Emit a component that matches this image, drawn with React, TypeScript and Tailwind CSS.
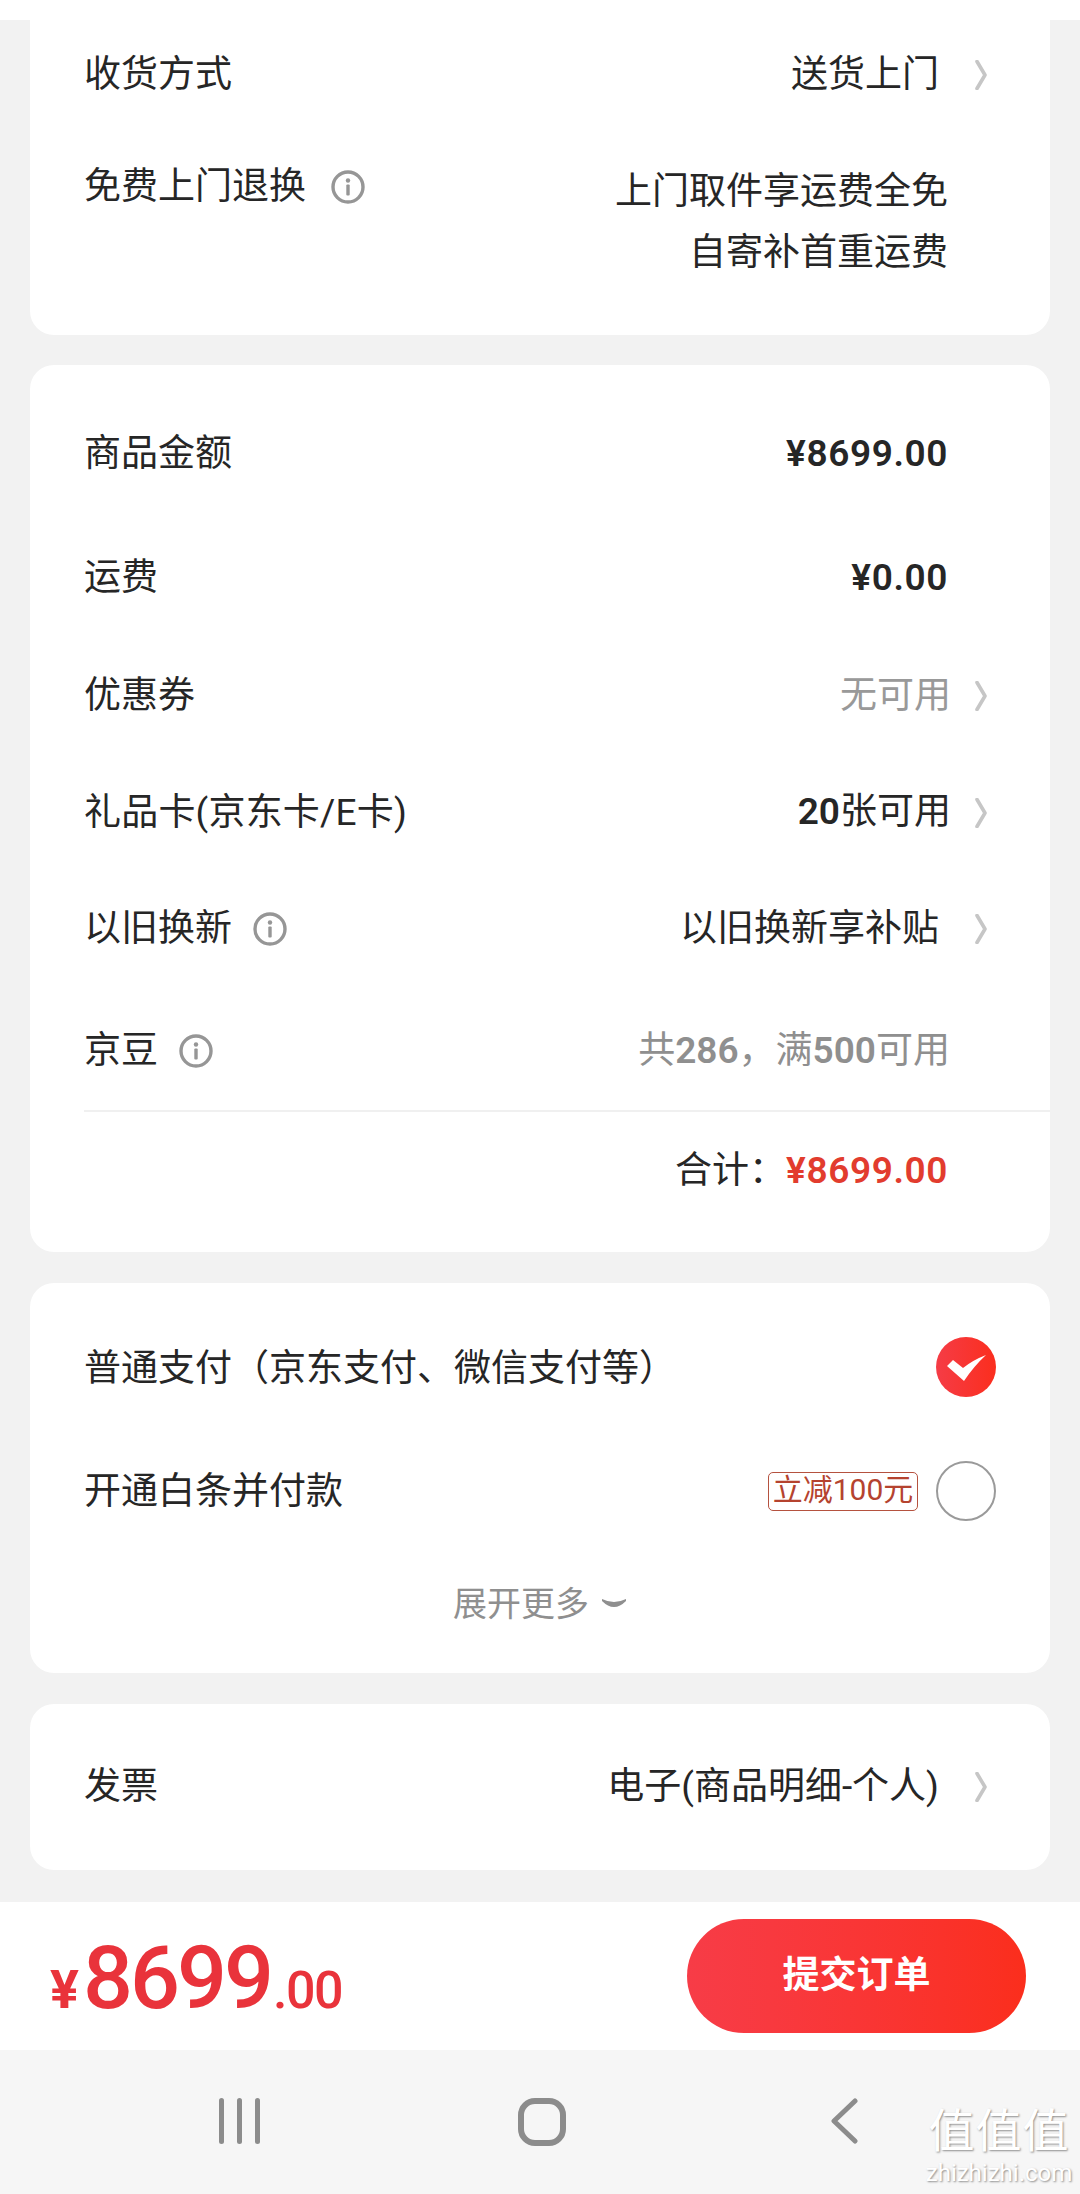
import type { ReactNode } from "react";

const Chevron = () => (
  <svg width="12" height="30" viewBox="0 0 12 30" fill="none" className="shrink-0">
    <path d="M2 1.5 L10 15 L2 28.5" stroke="#c6c6c6" strokeWidth="3.6" strokeLinecap="round" strokeLinejoin="round" />
  </svg>
);

const InfoIcon = () => (
  <svg width="34" height="34" viewBox="0 0 34 34" fill="none" className="shrink-0">
    <circle cx="17" cy="17" r="15" stroke="#969696" strokeWidth="3.4" />
    <circle cx="17" cy="10.5" r="2.2" fill="#969696" />
    <rect x="15.3" y="14.5" width="3.4" height="11" rx="1" fill="#969696" />
  </svg>
);

const CheckedIcon = () => (
  <svg width="60" height="60" viewBox="0 0 60 60" className="shrink-0">
    <defs>
      <linearGradient id="checkFill" x1="0" y1="0" x2="1" y2="0">
        <stop offset="0" stopColor="#f53c46" />
        <stop offset="1" stopColor="#fb2e1e" />
      </linearGradient>
    </defs>
    <circle cx="30" cy="30" r="30" fill="url(#checkFill)" />
    <path d="M11 29 L17 23 L27 31 Q37 23 50 18 Q38 29 28 44 Z" fill="#fff" />
  </svg>
);

// right-hand part of a row: value + chevron
const Link = ({ children }: { children: ReactNode }) => (
  <div className="flex items-center gap-[36px]">
    <span>{children}</span>
    <Chevron />
  </div>
);

const Label = ({ text }: { text: string }) => (
  <div className="flex items-center gap-[21px]">
    <span>{text}</span>
    <InfoIcon />
  </div>
);

export default function App() {
  return (
    <div className="relative h-[2194px] w-full overflow-hidden bg-[#f2f2f2] font-['Roboto','Noto_Sans_CJK_SC',sans-serif] text-[37px] text-[#262626] flex flex-col">
      <div className="h-[20px] bg-white" />

      {/* delivery */}
      <section className="mx-[30px] h-[315px] rounded-b-[24px] bg-white pl-[54px]">
        <div className="flex h-[106px] items-center justify-between pt-[4px] pr-[63px]">
          <span>收货方式</span>
          <Link>送货上门</Link>
        </div>
        <div className="flex items-start justify-between pt-[30px] pr-[102px] leading-[61px]">
          <div className="flex items-center gap-[25px]">
            <span>免费上门退换</span>
            <InfoIcon />
          </div>
          <div className="mt-[5px] text-right">
            <div>上门取件享运费全免</div>
            <div>自寄补首重运费</div>
          </div>
        </div>
      </section>

      {/* amounts */}
      <section className="mx-[30px] mt-[30px] h-[887px] rounded-[24px] bg-white pt-[28px] pl-[54px]">
        <div className="flex h-[120px] items-center justify-between pt-[2px] pr-[102px]">
          <span>商品金额</span>
          <span className="font-semibold tracking-[0.6px]">¥8699.00</span>
        </div>
        <div className="flex h-[128px] items-center justify-between pt-[2px] pr-[102px]">
          <span>运费</span>
          <span className="font-semibold tracking-[0.6px]">¥0.00</span>
        </div>
        <div className="flex h-[110px] items-center justify-between pr-[63px]">
          <span>优惠券</span>
          <div className="flex items-center gap-[24px]">
            <span className="text-[#999999]">无可用</span>
            <Chevron />
          </div>
        </div>
        <div className="flex h-[124px] items-center justify-between pr-[63px]">
          <span className="tracking-[0.2px]">礼品卡(京东卡/E卡)</span>
          <div className="flex items-center gap-[24px]">
            <span className="-mt-[2px]">
              <span className="font-semibold">20</span>张可用
            </span>
            <Chevron />
          </div>
        </div>
        <div className="flex h-[108px] items-center justify-between pr-[63px]">
          <Label text="以旧换新" />
          <Link>以旧换新享补贴</Link>
        </div>
        <div className="flex h-[127px] items-center justify-between pt-[8px] pr-[100px]">
          <Label text="京豆" />
          <span className="text-[#8f8f8f]">
            共<span className="font-semibold">286</span>，满<span className="font-semibold">500</span>可用
          </span>
        </div>
        <div className="h-[2px] bg-[#f0f0f0]" />
        <div className="flex h-[116px] items-center justify-end pt-[2px] pr-[102px]">
          <span>合计：</span>
          <span className="font-semibold tracking-[0.6px] text-[#e23c2e]">¥8699.00</span>
        </div>
      </section>

      {/* payment */}
      <section className="mx-[30px] mt-[31px] h-[390px] rounded-[24px] bg-white pt-[24px] pl-[54px] pr-[54px]">
        <div className="flex h-[120px] items-center justify-between">
          <span className="mt-[4px]">普通支付（京东支付、微信支付等）</span>
          <CheckedIcon />
        </div>
        <div className="flex h-[128px] items-center justify-between">
          <span className="mt-[2px]">开通白条并付款</span>
          <div className="flex items-center gap-[18px]">
            <span className="flex h-[39px] w-[150px] items-center justify-center rounded-[5px] border border-[#b5523f] pb-[2px] text-[30px] leading-none text-[#b5432f]">
              立减100元
            </span>
            <span className="h-[60px] w-[60px] rounded-full border-2 border-[#9a9a9a]" />
          </div>
        </div>
        <div className="flex h-[96px] items-center justify-center gap-[12px] pt-[2px] text-[34px] text-[#8f8f8f]">
          <span>展开更多</span>
          <svg width="26" height="12" viewBox="0 0 26 12" fill="none">
            <path d="M1 1 Q13 7 25 1 L25 3 Q13 15 1 3 Z" fill="#8f8f8f" />
          </svg>
        </div>
      </section>

      {/* invoice */}
      <section className="mx-[30px] mt-[31px] flex h-[166px] items-center justify-between rounded-[24px] bg-white pl-[54px] pr-[63px]">
        <span>发票</span>
        <Link>电子(商品明细-个人)</Link>
      </section>

      {/* submit bar */}
      <footer className="mt-[32px] flex h-[148px] items-center justify-between bg-white pl-[50px] pr-[54px]">
        <div className="mt-[4px] flex items-baseline font-medium leading-none text-[#e9333b]">
          <span className="text-[54px] font-bold">¥</span>
          <span className="ml-[4px] text-[88px] tracking-[-3px]">8699</span>
          <span className="ml-[2px] text-[52px] tracking-[-1.5px]">.00</span>
        </div>
        <button className="h-[114px] w-[339px] rounded-[57px] bg-gradient-to-r from-[#f73c47] to-[#fb2e1c] font-bold text-white">
          提交订单
        </button>
      </footer>

      {/* system nav */}
      <nav className="flex h-[144px] items-start bg-[#f6f6f6] pt-[48px] pl-[219px]">
        <svg width="41" height="46" viewBox="0 0 41 46" fill="#8c8c8c">
          <rect x="0" y="0" width="5" height="46" rx="2.5" />
          <rect x="18" y="0" width="5" height="46" rx="2.5" />
          <rect x="36" y="0" width="5" height="46" rx="2.5" />
        </svg>
        <svg width="48" height="48" viewBox="0 0 48 48" fill="none" className="ml-[258px]">
          <rect x="3" y="3" width="42" height="42" rx="14" stroke="#8c8c8c" strokeWidth="6" />
        </svg>
        <svg width="28" height="46" viewBox="0 0 28 46" fill="none" className="ml-[264px]">
          <path d="M25 3 L4 23 L25 43" stroke="#8c8c8c" strokeWidth="5" strokeLinecap="round" strokeLinejoin="round" />
        </svg>
      </nav>

      {/* site mark in the corner */}
      <div className="absolute right-[10px] bottom-[8px] flex w-[142px] flex-col items-center text-white [text-shadow:1px_1px_2px_#8f8f8f]">
        <span className="text-[46px] leading-[50px] tracking-[1px]">值值值</span>
        <span className="mt-[4px] text-[24px] leading-[26px]">zhizhizhi.com</span>
      </div>
    </div>
  );
}
